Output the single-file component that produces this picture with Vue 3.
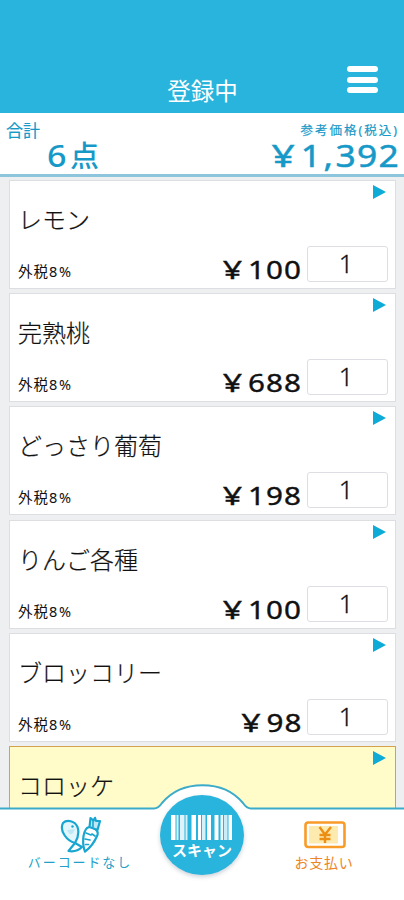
<script setup>
const items = [
  { name: 'レモン', price: '100', qty: 1 },
  { name: '完熟桃', price: '688', qty: 1 },
  { name: 'どっさり葡萄', price: '198', qty: 1 },
  { name: 'りんご各種', price: '100', qty: 1 },
  { name: 'ブロッコリー', price: '98', qty: 1 },
  { name: 'コロッケ', active: true },
]
const bars = [
  [0, 4.5, 1], [5.5, 2, 0.8], [9, 4.5, 0.85], [14.5, 2, 0.8], [20.5, 4.5, 1], [27, 3, 1],
  [31, 3.5, 0.8], [36, 4, 1], [43.5, 4, 1], [49.5, 2.5, 0.9], [53, 3.5, 0.75], [57.5, 3.5, 1],
]
</script>

<template>
  <div class="screen">
    <header class="header">
      <h1 class="title">登録中</h1>
      <div class="menu"><i></i><i></i><i></i></div>
    </header>
    <section class="summary">
      <div class="count">
        <div class="count-label">合計</div>
        <div class="count-value"><span class="six">6</span><span class="ten">点</span></div>
      </div>
      <div class="total">
        <div class="total-label">参考価格(税込)</div>
        <div class="total-value"><span class="yen">¥</span>1<span class="comma">,</span>392</div>
      </div>
    </section>
    <main class="list">
      <article v-for="item in items" :key="item.name" class="card" :class="{ active: item.active }">
        <svg class="arrow" viewBox="0 0 13 14"><path d="M0 0L13 7L0 14Z" /></svg>
        <div class="name">{{ item.name }}</div>
        <div v-if="item.price" class="row">
          <div class="tax">外税<span>8%</span></div>
          <div class="price"><span class="yen">¥</span>{{ item.price }}</div>
          <div class="qty">{{ item.qty }}</div>
        </div>
      </article>
    </main>
    <footer class="footer">
      <svg class="edge" viewBox="0 0 404 30" width="404" height="30">
        <path class="edge-fill" d="M0 24.5H154C158 24.5 160 22 162 19C172 7 187 1.2 202.5 1.2S233 7 243 19C245 22 247 24.5 251 24.5H404V30H0Z" />
        <path class="edge-line" d="M-2 24.5H154C158 24.5 160 22 162 19C172 7 187 1.2 202.5 1.2S233 7 243 19C245 22 247 24.5 251 24.5H406" />
      </svg>
      <div class="tab nobar">
        <svg width="42" height="38" viewBox="0 0 42 38">
          <g fill="none" stroke="#18a6d1" stroke-width="2.2" stroke-linejoin="round" stroke-linecap="round">
            <path fill="#e3f6fc" d="M3 7C7 3 15 5 17.500 11C19.500 17 18 22 15 27C7 25 -1 15 3 7Z" />
            <path d="M7 14Q11 23 15 13" fill="#bfe8f6" stroke="none" />
            <path fill="#fff" d="M15 27L8.500 35C14 36 19 34 22 31L15 27Z" />
            <path fill="#fff" d="M27 12C32 9 39 14 37.500 19C35 25 30 32 25 35.500C22.500 30 22 17 27 12Z" />
            <path fill="#bfe8f6" d="M29.500 11L30.500 2L33.500 4.500L35 1.800L36 5L40 5L37.500 14Z" />
            <path d="M33 5L33 11" stroke-width="1.6" />
            <path d="M26 17L31 19M25 23L30 24M25.500 28.500L28.500 28.500M35 20L32 18" stroke-width="1.7" />
          </g>
          <circle cx="12.500" cy="10.500" r="1.2" fill="#18a6d1" />
        </svg>
        <span>バーコードなし</span>
      </div>
      <div class="scan">
        <svg width="62" height="25" viewBox="0 0 62 25">
          <rect v-for="b in bars" :key="b[0]" :x="b[0]" y="0" :width="b[1]" height="25" :opacity="b[2]" fill="#fff" />
        </svg>
        <span>スキャン</span>
      </div>
      <div class="tab pay">
        <svg width="42" height="28" viewBox="0 0 42 28">
          <rect x="1.500" y="1.500" width="39" height="24.500" rx="2.500" fill="#fff" stroke="#f99b27" stroke-width="2.6" />
          <rect x="5" y="5" width="29" height="17.500" fill="#fdeaae" />
          <path d="M15.500 6L21 13.500L27 6M21 13.500V22M15.500 14H26.500M15.500 18H26.500" fill="none" stroke="#ed8e14" stroke-width="2.4" />
        </svg>
        <span>お支払い</span>
      </div>
    </footer>
  </div>
</template>

<style>
body { margin: 0; }
</style>

<style scoped>
.screen {
  width: 404px;
  height: 900px;
  overflow: hidden;
  display: flex;
  flex-direction: column;
  background: #eeeff1;
  color: #111;
  font-family: "Noto Sans", "Noto Sans CJK JP", sans-serif;
}
.header {
  flex: none;
  height: 113px;
  box-sizing: border-box;
  background: #28b4dc;
  display: grid;
  grid-template-columns: 1fr auto 1fr;
  padding: 66px 26px 0;
}
.title {
  grid-column: 2;
  margin: 11px 0 0 1px;
  font-size: 23.5px;
  line-height: 28px;
  height: 28px;
  font-weight: 400;
  color: #fff;
}
.menu {
  grid-column: 3;
  justify-self: end;
  display: flex;
  flex-direction: column;
  gap: 4.5px;
}
.menu i { width: 31px; height: 6px; border-radius: 3px; background: #fff; }
.summary {
  flex: none;
  height: 64px;
  box-sizing: border-box;
  background: #fff;
  border-bottom: 3px solid #8cc5dc;
  display: flex;
  justify-content: space-between;
  padding: 8px 6px 0;
  color: #1799c8;
}
.count-label { font-size: 17px; line-height: 20px; font-weight: 400; -webkit-text-stroke: .2px; }
.count-value { display: flex; align-items: baseline; padding-left: 41px; line-height: 28px; height: 28px; font-weight: 500; }
.six { font-size: 31px; width: 23px; transform: scaleX(1.1); transform-origin: left; }
.ten { font-size: 29px; }
.total { display: flex; flex-direction: column; align-items: flex-end; }
.total-label { font-size: 12.5px; line-height: 20px; letter-spacing: 2px; font-weight: 400; margin-right: -1px; -webkit-text-stroke: .2px; }
.total-value {
  font-size: 30.5px;
  line-height: 28px;
  letter-spacing: 1.1px;
  font-weight: 400;
  -webkit-text-stroke: .5px;
  display: flex;
  transform: scaleX(1.16);
  transform-origin: right;
  margin-right: -2px;
}
.total-value .yen { margin-right: 4px; transform: scaleX(1.15); transform-origin: right; }
.comma { margin: 0 1px; }
.list {
  flex: none;
  height: 631px;
  box-sizing: border-box;
  padding: 3px 8px 0 9px;
  display: flex;
  flex-direction: column;
  gap: 4.2px;
  overflow: hidden;
}
.card {
  flex: none;
  position: relative;
  height: 109px;
  box-sizing: border-box;
  border: 1.5px solid #dcdee2;
  background: #fff;
  padding: 22px 7px 6px 8px;
  display: flex;
  flex-direction: column;
  justify-content: space-between;
}
.card.active { background: #fffcca; border-color: #d4a24d; }
.arrow { position: absolute; top: 4px; right: 9px; width: 13px; height: 14px; fill: #0fabd7; }
.name { font-size: 24px; line-height: 32px; font-family: "Noto Sans CJK JP", sans-serif; font-weight: 300; -webkit-text-stroke: .2px; }
.row { display: flex; align-items: flex-end; }
.tax { flex: 1; font-size: 14.5px; line-height: 18px; padding-bottom: 2px; font-weight: 400; letter-spacing: 1px; }
.tax span { letter-spacing: 1.8px; }
.price {
  display: flex;
  font-size: 25.5px;
  line-height: 26px;
  font-weight: 400;
  -webkit-text-stroke: .4px;
  letter-spacing: .9px;
  transform: scaleX(1.16);
  transform-origin: right;
  margin: 0 5px 0 0;
}
.price .yen { margin-right: 4px; transform: scaleX(1.15); transform-origin: right; }
.qty {
  width: 81px;
  height: 36px;
  box-sizing: border-box;
  border: 1.5px solid #dcdee3;
  border-radius: 3px;
  padding-right: 3px;
  text-align: center;
  font-size: 25.5px;
  line-height: 33px;
  font-weight: 300;
  -webkit-text-stroke: .3px;
}
.footer {
  flex: none;
  position: relative;
  height: 92px;
  background: #fff;
  display: grid;
  grid-template-columns: 160px 84px 160px;
}
.edge { position: absolute; left: 0; top: -24px; }
.edge-fill { fill: #fff; }
.edge-line { fill: none; stroke: #3cabca; stroke-width: 2; }
.tab { display: flex; flex-direction: column; align-items: center; position: relative; line-height: 18px; white-space: nowrap; font-family: "Noto Sans CJK JP", sans-serif; }
.nobar { color: #249fc8; font-size: 13px; letter-spacing: 1.9px; padding-top: 8px; }
.nobar svg { margin-left: 2px; }
.nobar span { margin-top: -1px; }
.pay { color: #ed8528; font-size: 14px; letter-spacing: .7px; padding-top: 13px; }
.pay svg { margin-left: 2px; }
.pay span { margin-top: 4px; }
.scan {
  position: relative;
  width: 84px;
  height: 80px;
  margin-top: -13px;
  border-radius: 50%;
  background: #28b4dc;
  box-shadow: 0 2px 4px rgba(80, 90, 110, .28);
  display: flex;
  flex-direction: column;
  align-items: center;
  box-sizing: border-box;
  padding-top: 20px;
  color: #fff;
}
.scan span { font: 700 15px/20px "Noto Sans CJK JP", sans-serif; margin-top: 0; }
</style>
